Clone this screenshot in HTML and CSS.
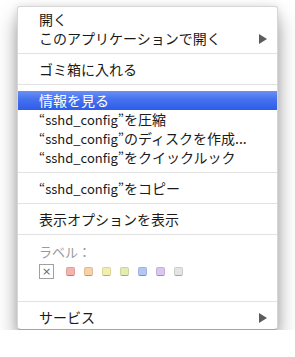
FILE: index.html
```html
<!DOCTYPE html>
<html lang="ja">
<head>
    <meta charset="UTF-8">
    <meta name="viewport" content="width=device-width, initial-scale=1.0">
    <title>コンテキストメニュー</title>
    <link rel="stylesheet" href="styles.css">
</head>
<body>
    <div class="menu">
        <div class="item">開く</div>
        <div class="item has-sub">このアプリケーションで開く<span class="arrow"></span></div>
        <div class="sep"></div>
        <div class="item">ゴミ箱に入れる</div>
        <div class="sep"></div>
        <div class="item active">情報を見る</div>
        <div class="item"><span class="name">“sshd_config”</span>を圧縮</div>
        <div class="item"><span class="name">“sshd_config”</span>のディスクを作成...</div>
        <div class="item"><span class="name">“sshd_config”</span>をクイックルック</div>
        <div class="sep"></div>
        <div class="item"><span class="name">“sshd_config”</span>をコピー</div>
        <div class="sep"></div>
        <div class="item">表示オプションを表示</div>
        <div class="sep"></div>
        <div class="labels">
            <div class="labels-title">ラベル：</div>
            <div class="swatches">
                <span class="none">×</span>
                <span class="swatch red"></span>
                <span class="swatch orange"></span>
                <span class="swatch yellow"></span>
                <span class="swatch green"></span>
                <span class="swatch blue"></span>
                <span class="swatch purple"></span>
                <span class="swatch gray"></span>
            </div>
        </div>
        <div class="sep"></div>
        <div class="item has-sub">サービス<span class="arrow"></span></div>
    </div>
</body>
</html>
```

FILE: styles.css
```css
* {
    margin: 0;
    padding: 0;
    box-sizing: border-box;
}
body {
    font-family: "Noto Sans CJK JP", "Noto Sans", sans-serif;
    background: #fff;
    color: #1a1a1a;
}
.menu {
    width: 261px;
    margin: 6px 0 0 17px;
    padding: 3px 0 2px;
    background: #fff;
    border: 1px solid #d6d6d6;
    border-bottom-color: #a4a4a4;
    border-radius: 3px 3px 4px 4px;
    box-shadow: 0 12px 20px rgba(0,0,0,0.38), 0 0 8px rgba(0,0,0,0.1);
}
.item {
    height: 19px;
    line-height: 19px;
    padding: 0 10px 0 21px;
    font-size: 14px;
    display: flex;
    align-items: center;
    white-space: nowrap;
}
.item.has-sub {
    justify-content: space-between;
}
.item.active {
    color: #fff;
    background: linear-gradient(#6b8ff4 0%, #4571ef 45%, #2f5ce9 100%);
}
.name {
    font-size: 13px;
}
.arrow {
    width: 0;
    height: 0;
    border-left: 8px solid #5c5c5c;
    border-top: 5px solid transparent;
    border-bottom: 5px solid transparent;
}
.sep {
    height: 1px;
    margin: 5px 0 6px;
    background: #e2e2e2;
}
.labels {
    padding: 2px 0 17px 21px;
}
.labels-title {
    height: 18px;
    line-height: 18px;
    font-size: 13px;
    color: #9a9a9a;
    margin-bottom: 3px;
}
.swatches {
    display: flex;
    align-items: center;
    height: 15px;
}
.none {
    width: 15px;
    height: 15px;
    border: 1px solid #a0a0a0;
    color: #666;
    font-family: "DejaVu Sans", sans-serif;
    font-size: 11px;
    line-height: 13px;
    text-align: center;
    margin-right: 12px;
}
.swatch {
    width: 9px;
    height: 9px;
    border-radius: 2px;
    margin-right: 9px;
    border: 1px solid rgba(0,0,0,0.1);
    border-bottom-color: rgba(0,0,0,0.28);
}
.red { background: #f6b3ad; }
.orange { background: #f9d1a6; }
.yellow { background: #f2efae; }
.green { background: #e6ebb2; }
.blue { background: #b3c7f6; }
.purple { background: #dbc6ef; }
.gray { background: #e4e4e4; }
```
